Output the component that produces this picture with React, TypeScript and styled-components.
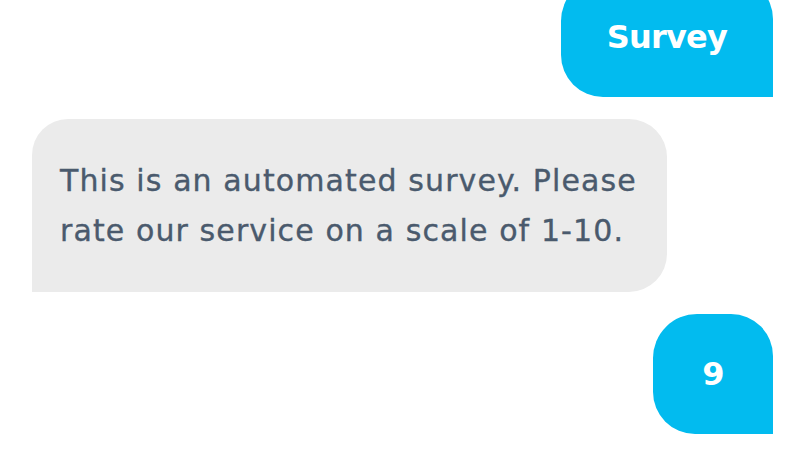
import React from "react";
import styled, { createGlobalStyle } from "styled-components";

const Global = createGlobalStyle`
  html, body { margin: 0; padding: 0; background: #ffffff; }
  body { font-family: "DejaVu Sans", Inter, sans-serif; overflow: hidden; }
`;

const Thread = styled.div`
  display: flex;
  flex-direction: column;
  gap: 22px;
  padding: 0 27px 0 32px;
  margin-top: -23px;
`;

const Row = styled.div<{ $mine?: boolean }>`
  display: flex;
  justify-content: ${(p) => (p.$mine ? "flex-end" : "flex-start")};
`;

const Sent = styled.div`
  background: #02bbef;
  color: #ffffff;
  font-weight: 700;
  font-size: 32px;
  letter-spacing: -0.8px;
  line-height: 40px;
  padding: 40px 46px;
  min-width: 28px;
  text-align: center;
  border-radius: 44px 42px 0 42px;
`;

const Received = styled.div`
  background: #ebebeb;
  color: #4a5a6d;
  font-weight: 400;
  font-size: 30px;
  letter-spacing: 1.1px;
  line-height: 50px;
  -webkit-text-stroke: 0.35px currentColor;
  padding: 37px 30px 36px 28px;
  max-width: 577px;
  border-radius: 36px 38px 38px 0;
`;

export default function App() {
  return (
    <>
      <Global />
      <Thread>
        <Row $mine>
          <Sent>Survey</Sent>
        </Row>
        <Row>
          <Received>
            This is an automated survey. Please rate our service on a scale of 1-10.
          </Received>
        </Row>
        <Row $mine>
          <Sent>9</Sent>
        </Row>
      </Thread>
    </>
  );
}
